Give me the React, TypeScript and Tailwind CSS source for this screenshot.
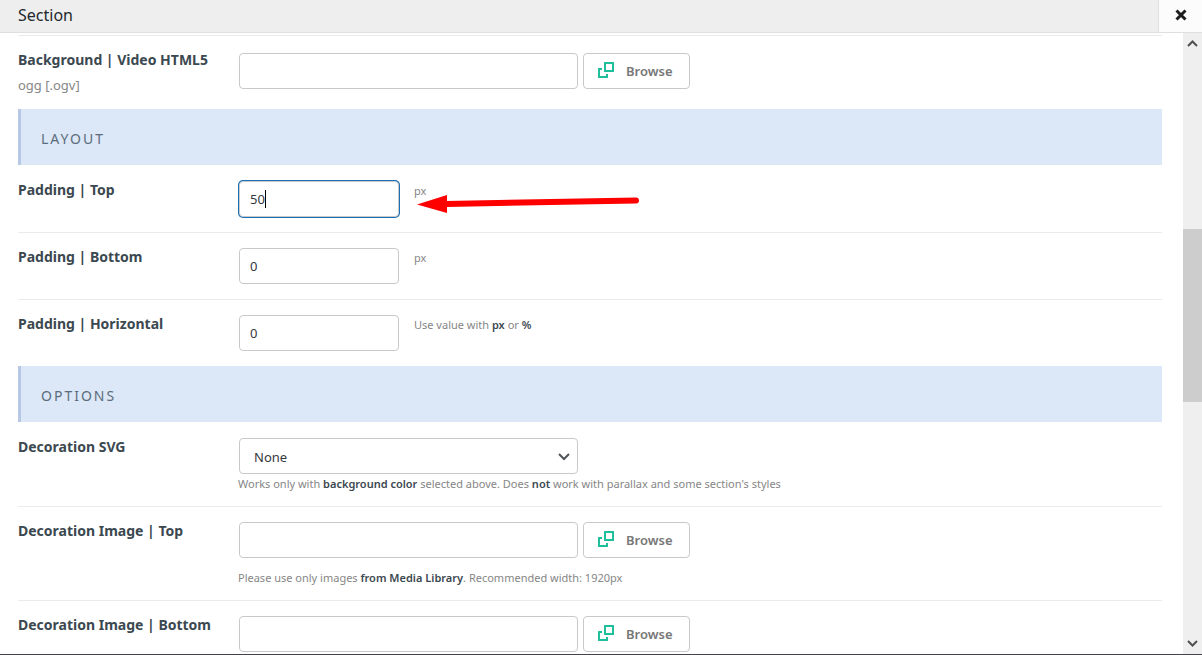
import type { ReactNode } from "react";

interface FieldProps {
  id: string;
  label: string;
  hint?: string;
  first?: boolean;
  children: ReactNode;
}

function Field({ id, label, hint, first, children }: FieldProps) {
  return (
    <div
      className={`flex border-t py-[15px] ${first ? "border-transparent" : "border-[#ebebeb]"}`}
    >
      <div className="w-[220px] shrink-0">
        <label
          htmlFor={id}
          className="block text-sm leading-[18px] font-bold text-[#3b4850]"
        >
          {label}
        </label>
        {hint && (
          <p className="pt-[8px] text-[13px] leading-[17px] text-[#868686]">
            {hint}
          </p>
        )}
      </div>
      <div className="min-w-0 flex-1">{children}</div>
    </div>
  );
}

function Heading({ children }: { children: ReactNode }) {
  return (
    <h2 className="border-l-[3px] border-[#b6c8e4] bg-[#dce7f7] px-5 pt-[20px] pb-[16px] text-sm leading-5 tracking-[2px] text-[#5b6d7c] uppercase">
      {children}
    </h2>
  );
}

function BrowseButton() {
  return (
    <button
      type="button"
      className="flex h-9 w-[107px] items-center gap-3 rounded-[4px] border border-[#c9c9c9] bg-white pl-[14px] text-[13px] font-semibold text-[#777]"
    >
      <svg width="16" height="16" viewBox="0 0 16 16" fill="#1fbf9c" className="mb-[2px] shrink-0">
        <path
          fillRule="evenodd"
          d="M6.5 0h9a.5.5 0 0 1 .5.5v9a.5.5 0 0 1-.5.5h-9a.5.5 0 0 1-.5-.5v-9a.5.5 0 0 1 .5-.5zM8 2v6h6V2z"
        />
        <path d="M.5 6H4v2H2v6h6v-2h2v3.500a.5.5 0 0 1-.5.5h-9a.5.5 0 0 1-.5-.5v-9A.5.5 0 0 1 .5 6z" />
      </svg>
      <span className="pt-[2px]">Browse</span>
    </button>
  );
}

function UploadInput({ id }: { id: string }) {
  return (
    <div className="flex items-end gap-[5px] pl-px">
      <input
        id={id}
        type="text"
        className="h-9 w-[339px] self-start rounded-[4px] border border-[#c9c9c9] bg-white px-[10px] text-[13px] text-[#32373c] outline-none"
      />
      <BrowseButton />
    </div>
  );
}

interface SizeInputProps {
  id: string;
  value: string;
  active?: boolean;
  children: ReactNode;
}

function SizeInput({ id, value, active, children }: SizeInputProps) {
  return (
    <div className="relative flex items-start gap-[15px] pl-px">
      <input
        id={id}
        type="text"
        defaultValue={value}
        className={`h-9 w-[160px] rounded-[4px] border border-[#c9c9c9] bg-white px-[10px] text-[13px] text-[#32373c] outline-none ${
          active ? "ring-1 ring-[#1a6fb5]" : ""
        }`}
      />
      {active && (
        <span className="absolute top-[9px] left-[27px] h-[18px] w-px bg-black" />
      )}
      <p className="pt-px text-[11px] leading-[17px] text-[#868686]">
        {children}
      </p>
      {active && (
        <svg
          width="224"
          height="20"
          viewBox="0 0 224 20"
          className="absolute top-[14px] left-[179px]"
        >
          <path d="M29 9 219 5.500" stroke="#fe0000" strokeWidth="6" strokeLinecap="round" />
          <path d="M0 9.500 30 0v18z" fill="#fe0000" />
        </svg>
      )}
    </div>
  );
}

function Strong({ children }: { children: ReactNode }) {
  return <strong className="font-semibold text-[#3b4850]">{children}</strong>;
}

function ScrollBar() {
  return (
    <div className="flex w-[19px] shrink-0 flex-col bg-[#efefef]">
      <svg width="19" height="21" viewBox="0 0 19 21" fill="none" stroke="#505050" strokeWidth="2">
        <path d="m5 13 4.500-4.500L14 13" />
      </svg>
      <div className="grow-[175]" />
      <div className="grow-[173] bg-[#cdcdcd]" />
      <div className="grow-[231]" />
      <svg width="19" height="21" viewBox="0 0 19 21" fill="none" stroke="#505050" strokeWidth="2">
        <path d="m5 8 4.500 4.500L14 8" />
      </svg>
    </div>
  );
}

export default function App() {
  return (
    <div className="flex h-screen flex-col overflow-hidden border-b border-[#454347] bg-white font-['Noto_Sans',sans-serif]">
      <header className="flex h-[33px] shrink-0 border-b border-[#dfdfdf] bg-[#eee]">
        <h1 className="flex-1 pl-[18px] text-base leading-[30px] text-[#23282d]">
          Section
        </h1>
        <button
          type="button"
          aria-label="Close"
          className="flex w-11 items-center justify-center border-l border-[#dfdfdf] bg-[#fcfcfc] pb-[2px]"
        >
          <svg width="12" height="12" viewBox="0 0 12 12" stroke="#1c1c1c" strokeWidth="3">
            <path d="m1.500 1.500 9 9M10.500 1.500l-9 9" />
          </svg>
        </button>
      </header>

      <div className="flex min-h-0 flex-1">
        <form className="min-w-0 flex-1 overflow-hidden pt-[2px] pr-[21px] pl-[18px]">
          <Field id="video" label="Background | Video HTML5" hint="ogg [.ogv]">
            <div className="pt-[2px]">
              <UploadInput id="video" />
            </div>
          </Field>

          <Heading>Layout</Heading>
          <Field id="padding-top" label="Padding | Top" first>
            <SizeInput id="padding-top" value="50" active>
              px
            </SizeInput>
          </Field>
          <Field id="padding-bottom" label="Padding | Bottom">
            <SizeInput id="padding-bottom" value="0">
              px
            </SizeInput>
          </Field>
          <Field id="padding-horizontal" label="Padding | Horizontal">
            <SizeInput id="padding-horizontal" value="0">
              Use value with <Strong>px</Strong> or <Strong>%</Strong>
            </SizeInput>
          </Field>

          <Heading>Options</Heading>
          <Field id="decoration" label="Decoration SVG" first>
            <div className="relative ml-px w-[339px]">
              <select
                id="decoration"
                className="block h-9 w-full appearance-none rounded-[4px] border border-[#c9c9c9] bg-white px-[14px] pt-[3px] text-[13px] text-[#32373c] outline-none"
              >
                <option>None</option>
              </select>
              <svg
                width="12"
                height="8"
                viewBox="0 0 12 8"
                fill="none"
                stroke="#50555a"
                strokeWidth="2"
                className="pointer-events-none absolute top-[15px] right-2"
              >
                <path d="m1 1 5 5 5-5" />
              </svg>
            </div>
            <p className="pt-[2px] text-[11px] leading-[15px] text-[#868686]">
              Works only with <Strong>background color</Strong> selected above.
              Does <Strong>not</Strong> work with parallax and some section's
              styles
            </p>
          </Field>
          <Field id="image-top" label="Decoration Image | Top">
            <UploadInput id="image-top" />
            <p className="pt-[12px] text-[11px] leading-[15px] text-[#868686]">
              Please use only images <Strong>from Media Library</Strong>.
              Recommended width: 1920px
            </p>
          </Field>
          <Field id="image-bottom" label="Decoration Image | Bottom">
            <UploadInput id="image-bottom" />
          </Field>
        </form>
        <ScrollBar />
      </div>
    </div>
  );
}
